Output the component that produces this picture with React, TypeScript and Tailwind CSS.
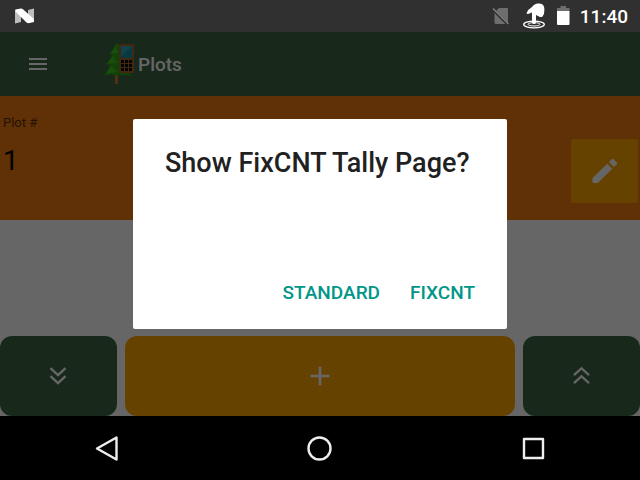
import React from "react";
import { MdAdd, MdMenu } from "react-icons/md";

function NougatIcon() {
  return (
    <svg width="20" height="16" viewBox="0 0 20 16" aria-hidden="true">
      <path d="M1 1.500 L7 6 V14 L1 15.500Z" fill="#bdbdbd" />
      <path d="M20 0.500 V14.500 L14 10 V2Z" fill="#bdbdbd" />
      <path d="M1.500 1.500 L7 0.500 Q8 0.500 9 1.300 L19.800 11 V14 L14.500 15.300 Q13.500 15.300 12.500 14.500 L1.500 3.500Z" fill="#fff" />
    </svg>
  );
}

function NoSimIcon() {
  return (
    <svg width="18" height="18" viewBox="0 0 18 18" aria-hidden="true">
      <path d="M7 1 H15 Q16 1 16 2 V16 L15 17 H4 Q2.500 17 2.500 15.500 V5.500Z" fill="#6e6e6e" />
      <path d="M0.500 2 L16 17.500" stroke="#303030" strokeWidth="3" />
      <path d="M1 1.500 L16.500 17" stroke="#858585" strokeWidth="1.300" />
    </svg>
  );
}

function TouchIcon() {
  return (
    <svg width="24" height="26" viewBox="0 0 24 26" aria-hidden="true">
      <ellipse cx="12" cy="21.500" rx="10.300" ry="3.300" fill="none" stroke="#fff" strokeWidth="1.300" />
      <ellipse cx="12" cy="21.300" rx="6" ry="1.700" fill="none" stroke="#fff" strokeWidth="1" />
      <path
        d="M10 9.500 L6 11 Q4.300 11.300 4.800 9.500 Q6 6.500 10 4 Q12.500 0.500 16 0.500 Q20 0 21.500 2.500 Q22.500 4 22.300 8 Q22.500 11.500 20.500 13.500 Q19 14.500 17 13.500 L14 12 V19.500 Q13.700 21 12 21 Q10.200 21 10 19.500Z"
        fill="#fff"
      />
    </svg>
  );
}

function BatteryIcon() {
  return (
    <svg width="14" height="20" viewBox="0 0 14 20" aria-hidden="true">
      <path d="M4.500 0 H10 V2 H13.500 V5 H1 V2 H4.500Z" fill="#6e6e6e" />
      <path d="M1 5 H13.500 V18 Q13.500 19 12.500 19 H2 Q1 19 1 18Z" fill="#fff" />
    </svg>
  );
}

function TreeLogo() {
  return (
    <svg width="32" height="42" viewBox="0 0 32 42" aria-hidden="true">
      <path d="M12 30 H15 V41 H12Z" fill="#c07a28" />
      <path
        d="M13 0 L18 2 V30 H26 L29 33 Q20 31.500 14 32.500 Q7 30.500 0.500 32.500 Q6 27 7 21.500 L2.500 21.500 Q8 16 9 11.500 L5.500 11.500 Q11 6 13 0Z"
        fill="#2ba814"
      />
      <path d="M13 3 L7.500 10.500 L15 10Z M10 13 L4.500 20.500 L14 20Z M8 23 L3 30.500 L15 29Z" fill="#3fc41e" />
      <rect x="16" y="1" width="15" height="29" fill="#a86225" />
      <rect x="18" y="3" width="11" height="12" fill="#168ea8" />
      <path d="M18 3 H29 L18 14Z" fill="#30a6c0" />
      <g fill="#100c08">
        <path d="M18 17h3v3h-3z M22 17h3v3h-3z M26 17h3v3h-3z" />
        <path d="M18 21h3v3h-3z M22 21h3v3h-3z M26 21h3v3h-3z" />
        <path d="M18 25h3v3h-3z M22 25h3v3h-3z M26 25h3v3h-3z" />
      </g>
    </svg>
  );
}

function PencilIcon() {
  return (
    <svg width="26" height="26" viewBox="0 0 26 26" fill="currentColor" aria-hidden="true">
      <path d="M0.500 20 L15.300 5.700 L20.300 10.700 L5.700 25 H1.500 Q0.500 25 0.500 24Z" />
      <path d="M17 4 L19.800 1.200 Q20.600 0.500 21.400 1.200 L24.800 4.600 Q25.500 5.400 24.800 6.200 L22 9Z" />
    </svg>
  );
}

function ChevronsDown() {
  return (
    <svg width="20" height="20" viewBox="0 0 20 20" fill="none" stroke="currentColor" strokeWidth="2.300" aria-hidden="true">
      <path d="M1.500 2.200 L9 9.200 L16.500 2.200 M1.500 10.200 L9 17.200 L16.500 10.200" />
    </svg>
  );
}

function ChevronsUp() {
  return (
    <svg width="20" height="20" viewBox="0 0 20 20" fill="none" stroke="currentColor" strokeWidth="2.300" aria-hidden="true">
      <path d="M2 9.200 L9.500 2.200 L17 9.200 M2 17.200 L9.500 10.200 L17 17.200" />
    </svg>
  );
}

function StatusBar() {
  return (
    <div className="flex h-8 items-center justify-between bg-[#303030] pr-3 pl-3.5 text-white">
      <NougatIcon />
      <div className="flex items-center">
        <NoSimIcon />
        <span className="pl-3">
          <TouchIcon />
        </span>
        <span className="px-2.5">
          <BatteryIcon />
        </span>
        <span className="pt-0.5 text-[19px] leading-6 font-medium">11:40</span>
      </div>
    </div>
  );
}

function NavigationBar() {
  return (
    <nav className="grid h-16 grid-cols-3 items-center bg-black text-[#eee]">
      <button type="button" aria-label="Back" className="flex justify-center">
        <svg width="26" height="26" viewBox="0 0 26 26" fill="none" stroke="currentColor" strokeWidth="2.400" strokeLinejoin="round">
          <path d="M22.500 2.500 V24.500 L3 13.500Z" />
        </svg>
      </button>
      <button type="button" aria-label="Home" className="flex justify-center">
        <svg width="26" height="26" viewBox="0 0 26 26" fill="none" stroke="currentColor" strokeWidth="2.400">
          <circle cx="12.500" cy="13.500" r="11" />
        </svg>
      </button>
      <button type="button" aria-label="Recent apps" className="flex justify-center">
        <svg width="26" height="26" viewBox="0 0 26 26" fill="none" stroke="currentColor" strokeWidth="2.400" strokeLinejoin="round">
          <path d="M4 4 H23 V23 H4Z" />
        </svg>
      </button>
    </nav>
  );
}

function TallyDialog() {
  return (
    <div className="absolute inset-0 flex items-center justify-center bg-black/60">
      <div
        role="dialog"
        aria-labelledby="tally-title"
        className="flex min-h-[210px] w-[374px] flex-col justify-between rounded-xs bg-white px-8 pt-7 pb-6"
      >
        <h2 id="tally-title" className="text-[27px] leading-8 font-medium whitespace-nowrap text-[#212121]">
          Show FixCNT Tally Page?
        </h2>
        <div className="flex justify-end gap-[30px] text-[19px] leading-6 font-medium text-[#009688]">
          <button type="button">STANDARD</button>
          <button type="button">FIXCNT</button>
        </div>
      </div>
    </div>
  );
}

export default function App() {
  return (
    <div className="flex min-h-screen flex-col bg-black font-[Roboto,sans-serif]">
      <StatusBar />
      <div className="relative flex flex-1 flex-col bg-white">
        <header className="flex h-16 items-center bg-[#3c6441] pl-[26px] text-white">
          <button type="button" aria-label="Menu">
            <MdMenu size={24} />
          </button>
          <span className="pr-[3px] pl-[53px]">
            <TreeLogo />
          </span>
          <h1 className="pt-0.5 text-[19px] leading-6 font-medium">Plots</h1>
        </header>
        <section className="flex h-[124px] items-start justify-between bg-[#f0780f] pr-0.5 pl-[3px]">
          <dl className="pt-[19px]">
            <dt className="text-[13px] leading-4 text-black/65">Plot #</dt>
            <dd className="pt-3 text-[28px] leading-9 text-black">1</dd>
          </dl>
          <button
            type="button"
            aria-label="Edit plot"
            className="mt-[43px] flex h-16 w-[67px] items-center justify-center rounded-xs bg-[#ffa500] text-white"
          >
            <PencilIcon />
          </button>
        </section>
        <div className="flex-1" />
        <div className="grid grid-cols-[3fr_10fr_3fr] gap-2 text-white">
          <button type="button" aria-label="Next plot" className="flex h-20 items-center justify-center rounded-xl bg-[#3c6441]">
            <ChevronsDown />
          </button>
          <button type="button" aria-label="Add plot" className="flex h-20 items-center justify-center rounded-xl bg-[#ffa500]">
            <MdAdd size={32} />
          </button>
          <button type="button" aria-label="Previous plot" className="flex h-20 items-center justify-center rounded-xl bg-[#3c6441]">
            <ChevronsUp />
          </button>
        </div>
        <TallyDialog />
      </div>
      <NavigationBar />
    </div>
  );
}
